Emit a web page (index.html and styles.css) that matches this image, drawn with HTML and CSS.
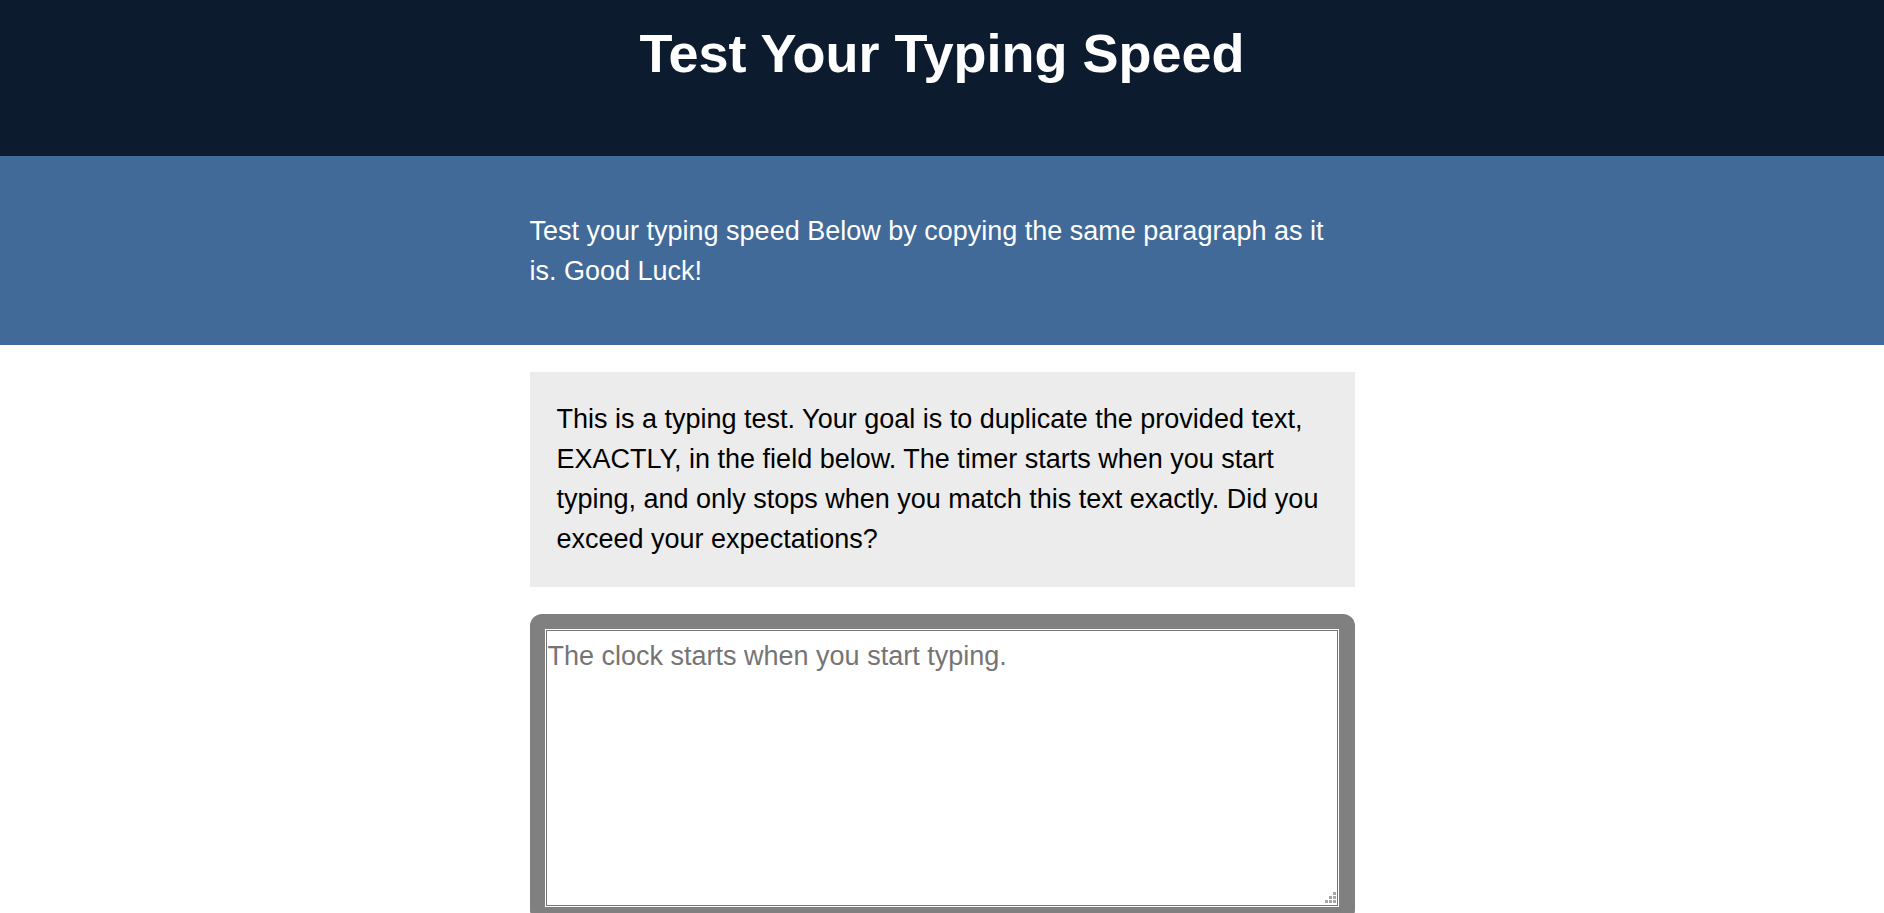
FILE: index.html
```html
<!DOCTYPE html>
<html lang="en">
<head>
<meta charset="utf-8">
<title>Test Your Typing Speed</title>
<link rel="stylesheet" href="styles.css">
</head>
<body>
<header class="masthead">
  <h1 class="title">Test Your Typing Speed</h1>
</header>
<section class="intro">
  <div class="column">
    <p class="intro-text">Test your typing speed Below by copying the same paragraph as it is. Good Luck!</p>
  </div>
</section>
<main class="column main">
  <div class="origin-text">
    <p>This is a typing test. Your goal is to duplicate the provided text, EXACTLY, in the field below. The timer starts when you start typing, and only stops when you match this text exactly. Did you exceed your expectations?</p>
  </div>
  <div class="test-wrapper">
    <textarea class="test-area" placeholder="The clock starts when you start typing."></textarea>
    <svg class="grip" width="11" height="11" viewBox="0 0 11 11" aria-hidden="true">
      <rect x="8" y="0" width="3" height="3"/>
      <rect x="4" y="4" width="3" height="3"/>
      <rect x="8" y="4" width="3" height="3"/>
      <rect x="0" y="8" width="3" height="3"/>
      <rect x="4" y="8" width="3" height="3"/>
      <rect x="8" y="8" width="3" height="3"/>
    </svg>
  </div>
</main>
</body>
</html>
```
FILE: styles.css
```css
html {
  overflow: hidden;
}
body {
  margin: 0;
  font-family: "Liberation Sans", Arial, sans-serif;
  font-size: 27px;
  line-height: 40px;
  color: #000;
  background: #fff;
}
.masthead {
  background: #0d1b2e;
  height: 156px;
  box-sizing: border-box;
  padding-top: 22px;
}
.title {
  margin: 0;
  text-align: center;
  color: #fff;
  font-size: 54px;
  line-height: 62px;
  font-weight: bold;
}
.column {
  width: 825px;
  margin: 0 auto;
}
.intro {
  background: #416a99;
  padding: 55px 0 54px;
}
.intro-text {
  margin: 0;
  color: #fff;
}
.main {
  padding-top: 27px;
}
.origin-text {
  background: #ececec;
  padding: 27px 27px 28px;
}
.origin-text p {
  margin: 0;
}
.test-wrapper {
  position: relative;
  margin-top: 27px;
  background: #808080;
  border-radius: 12px;
  padding: 15px 16px 15px 15px;
  display: flex;
}
.test-area {
  flex: 1;
  display: block;
  height: 278px;
  box-sizing: border-box;
  margin: 0;
  border: 1px solid #fff;
  box-shadow: inset 0 0 0 1px #777;
  padding: 6px 2px 2px;
  font-family: "Liberation Sans", Arial, sans-serif;
  font-size: 27px;
  line-height: 40px;
  color: #000;
  background: #fff;
  outline: none;
  resize: none;
}
.test-area::placeholder {
  color: #757575;
}
.grip {
  position: absolute;
  right: 19px;
  bottom: 19px;
  fill: #a6a6a6;
}
```
